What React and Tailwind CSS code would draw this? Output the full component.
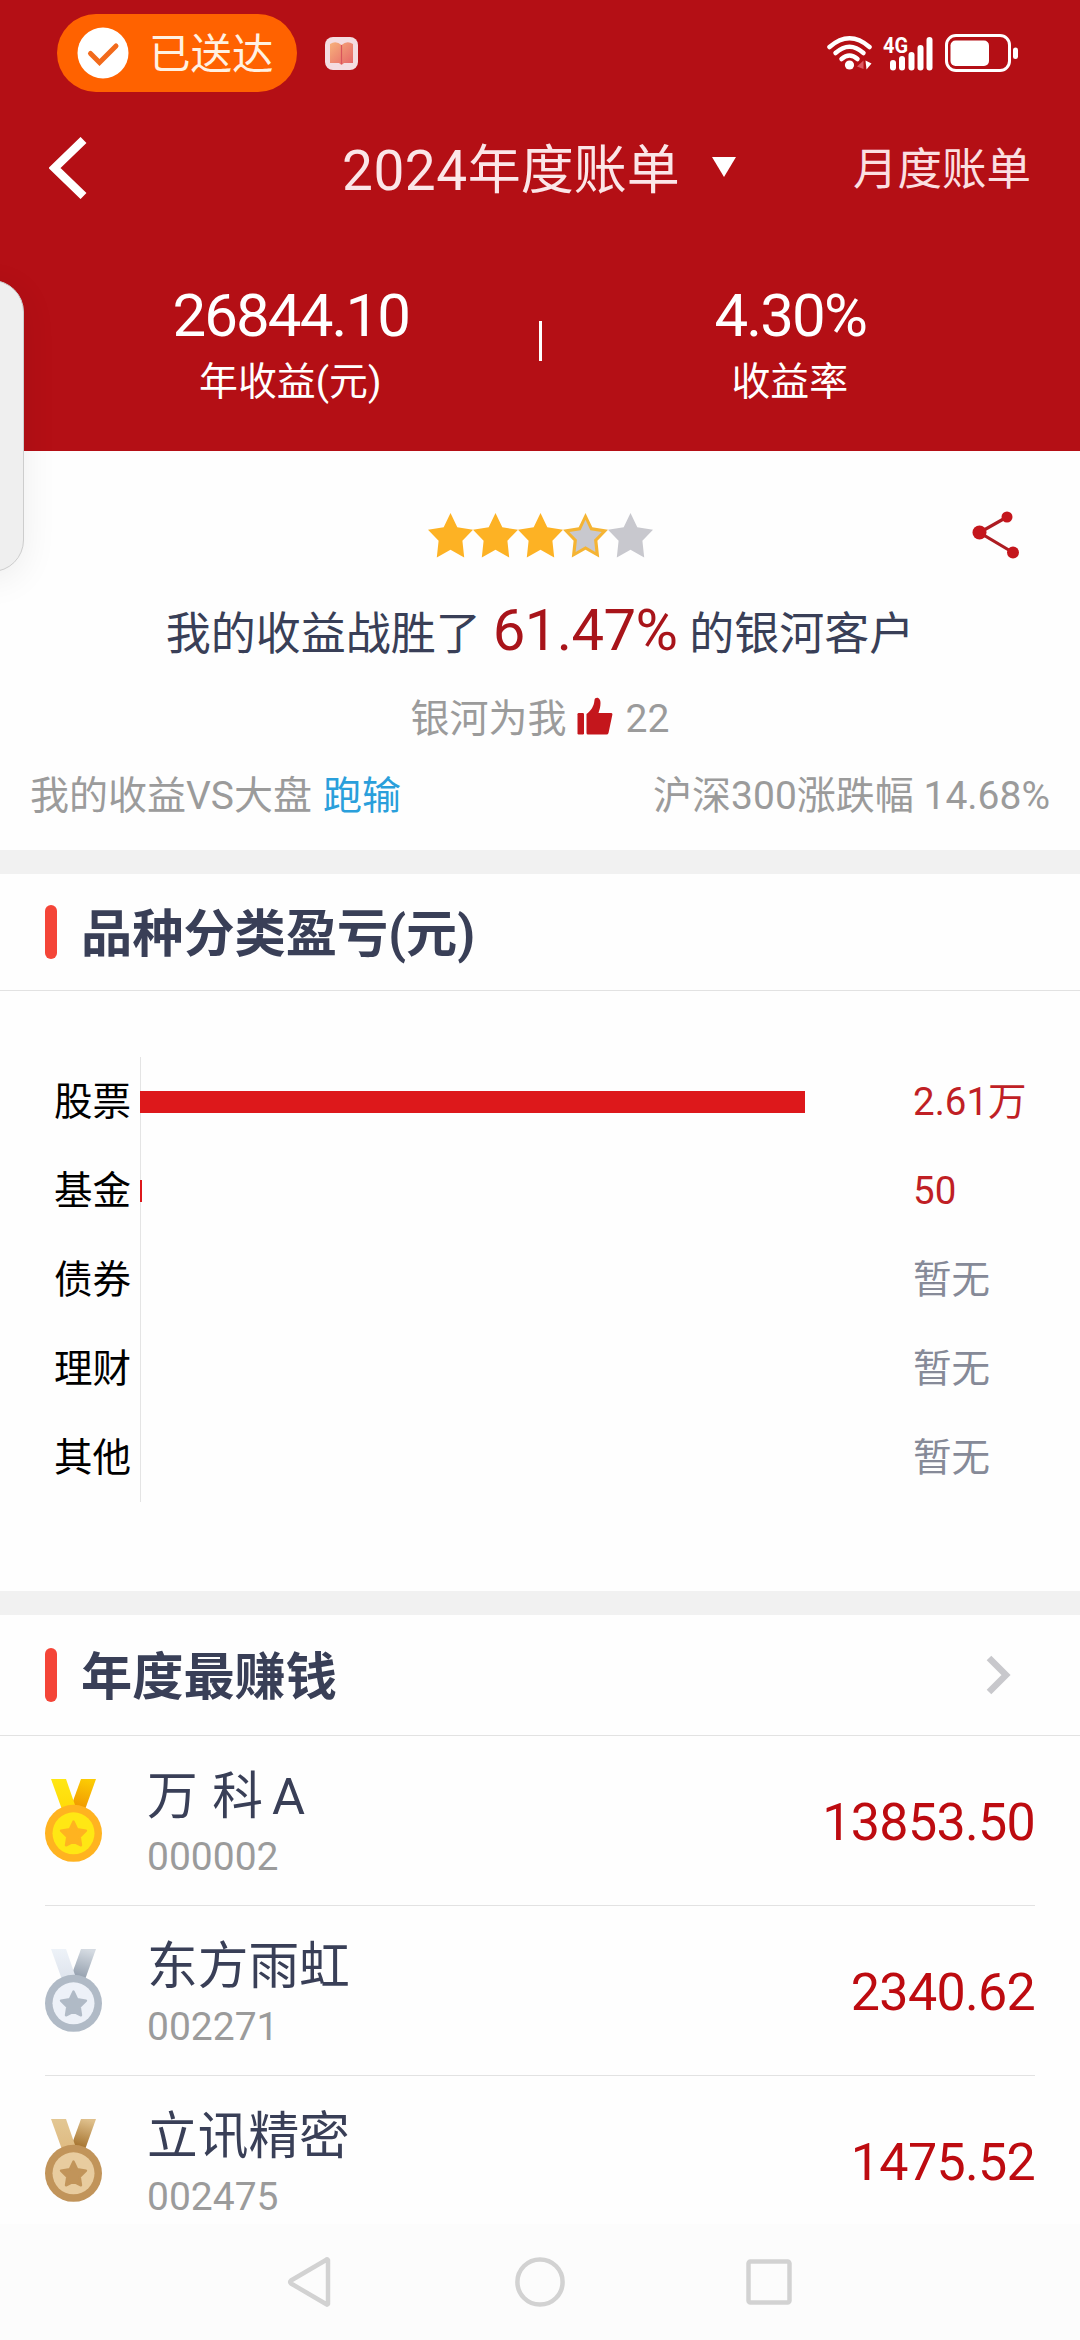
import clsx from "clsx";

const STAR_PATH =
  "M22.5 0 L29.3 14.3 L45 16.7 L34.4 27.7 L36.2 44.5 L22.5 36.7 L8.8 44.5 L10.6 27.7 L0 16.7 L15.7 14.3 Z";

const stars = ["full", "full", "full", "half", "empty"];

const categories = [
  { name: "股票", value: "2.61万", width: 665 },
  { name: "基金", value: "50", width: 1.5 },
  { name: "债券", value: null, width: 0 },
  { name: "理财", value: null, width: 0 },
  { name: "其他", value: null, width: 0 },
];

const topStocks = [
  {
    name: "万 科A",
    code: "000002",
    profit: "13853.50",
    medal: { id: "gold", ring: "#ffb320", face: "#ffe714", left: ["#ffe714", "#ffd908"], right: ["#fccb04", "#f09400"] },
  },
  {
    name: "东方雨虹",
    code: "002271",
    profit: "2340.62",
    medal: { id: "silver", ring: "#b0bac6", face: "#edf1f8", left: ["#edf2f8", "#dde3ec"], right: ["#d5dbe2", "#8d99a8"] },
  },
  {
    name: "立讯精密",
    code: "002475",
    profit: "1475.52",
    medal: { id: "bronze", ring: "#c1945a", face: "#e8cc9f", left: ["#e3c793", "#deba81"], right: ["#dfc08c", "#9e6a24"] },
  },
];

function StatusBar() {
  return (
    <div className="flex h-[106px] items-center pl-[57px] pr-[61px]">
      <div className="flex h-[78px] w-[240px] items-center rounded-full bg-[#ff6200] pl-[20px]">
        <svg width="52" height="52" viewBox="0 0 52 52" fill="none">
          <circle cx="26" cy="26" r="25.5" fill="#fff" />
          <path d="M13.5 26.5 L22.5 35.5 L39 19" stroke="#f26a1b" strokeWidth="5" strokeLinecap="round" />
        </svg>
        <span className="ml-[20px] pt-[3px] text-[41.5px] leading-[60px] text-[#fff1e2]">已送达</span>
      </div>
      <svg className="ml-[28px]" width="33" height="33" viewBox="0 0 33 33">
        <defs>
          <linearGradient id="book" x1="0" y1="0" x2="1" y2="1">
            <stop offset="0" stopColor="#f7b27c" />
            <stop offset="1" stopColor="#e56468" />
          </linearGradient>
        </defs>
        <rect width="33" height="33" rx="8" fill="#f4dde1" />
        <path d="M5 7 Q11 3 16.5 8 Q22 3 28 7 V26 H19 L16.5 28 L14 26 H5 Z" fill="url(#book)" />
        <path d="M16.5 8 V27" stroke="#d9545c" strokeWidth="1.2" />
      </svg>

      <div className="ml-auto flex items-center">
        <svg width="45" height="36" viewBox="0 0 45 36" fill="none" stroke="#fff" strokeLinecap="round">
          <path d="M2.5 12 Q22.5 -5.5 42.5 12" strokeWidth="4.5" />
          <path d="M8.5 18 Q22.5 5.5 36.5 18" strokeWidth="4.5" />
          <path d="M14.5 24 Q22.5 17 30.5 24" strokeWidth="4.5" />
          <circle cx="22.5" cy="30" r="4.6" fill="#fff" stroke="none" />
          <path d="M36.5 25.5 V34 L30 31.5 Z" fill="#dc5a62" stroke="none" />
          <path d="M38.5 25.5 L44.5 28.5 L39.5 34.5 Z" fill="#fff" stroke="none" />
        </svg>
        <svg className="ml-[10px] overflow-visible" width="52" height="36" viewBox="0 0 52 36">
          <text x="1" y="18" fontSize="22" fontWeight="700" fill="#fff" textLength="25" lengthAdjust="spacingAndGlyphs">
            4G
          </text>
          <g fill="#fff">
            <rect x="8" y="25" width="6" height="10.5" rx="3" />
            <rect x="17" y="21" width="6" height="14.5" rx="3" />
            <rect x="26.5" y="17" width="6" height="18.5" rx="3" />
            <rect x="35.5" y="10" width="6" height="25.5" rx="3" />
            <rect x="44.5" y="2" width="6" height="33.5" rx="3" />
          </g>
        </svg>
        <svg className="ml-[11px]" width="74" height="38" viewBox="0 0 74 38" fill="none">
          <rect x="1.5" y="1.5" width="63" height="35" rx="9.5" stroke="#fff" strokeWidth="3" />
          <rect x="5.5" y="6.5" width="38.5" height="25.5" rx="5" fill="#fff" />
          <rect x="68" y="13.5" width="5" height="11.5" rx="2.5" fill="#fff" />
        </svg>
      </div>
    </div>
  );
}

function Header() {
  return (
    <header className="h-[451px] bg-[#b40f15] text-white">
      <StatusBar />
      <div className="grid h-[124px] grid-cols-[293px_1fr_293px] items-center px-[49px]">
        <svg width="38" height="62" viewBox="0 0 38 62" fill="none">
          <path d="M34.5 3 L5.5 31 L34.5 59" stroke="#fff" strokeWidth="8.5" />
        </svg>
        <div className="flex items-center whitespace-nowrap pt-[6px] text-[53px] leading-[72px] text-[#fbe6e8]">
          <span className="text-[55px] tracking-[0.5px]">2024</span>
          <span>年度账单</span>
          <svg className="-mt-[8px] ml-[32px]" width="24" height="20" viewBox="0 0 24 20">
            <path d="M0 0 H24 L12 20 Z" fill="#fff" />
          </svg>
        </div>
        <span className="pt-[4px] text-right text-[44.5px] leading-[64px] text-[#fbdfe1]">月度账单</span>
      </div>
      <div className="px-[42px] pt-[52px]">
        <div className="flex h-[126px] items-center">
          <Stat value="26844.10" label="年收益(元)" />
          <div className="-mt-[8px] h-[40px] w-[3px] bg-white" />
          <Stat value="4.30%" label="收益率" />
        </div>
      </div>
    </header>
  );
}

function Stat({ value, label }) {
  return (
    <div className="flex flex-1 flex-col items-center gap-[6px]">
      <div className="pl-[1px] text-[60px] leading-[68px] tracking-[-1.9px]">{value}</div>
      <div className="text-[38.9px] leading-[52px]">{label}</div>
    </div>
  );
}

function Star({ type }) {
  if (type === "half") {
    return (
      <svg width="45" height="45" viewBox="0 0 45 45">
        <path d={STAR_PATH} fill="#f5b433" />
        <path d={STAR_PATH} fill="#c8c8ce" transform="translate(22.5 24.5) scale(0.72) translate(-22.5 -24.5)" />
      </svg>
    );
  }
  return (
    <svg width="45" height="45" viewBox="0 0 45 45">
      <path d={STAR_PATH} fill={type === "full" ? "#fdb224" : "#c8c8ce"} />
    </svg>
  );
}

function Summary() {
  return (
    <section className="h-[399px] pt-[60px] text-[#9b9b9b]">
      <div className="grid grid-cols-[1fr_auto_1fr] items-center px-[60px]">
        <div className="col-start-2 flex">
          {stars.map((type, i) => (
            <Star key={i} type={type} />
          ))}
        </div>
        <svg className="justify-self-end" width="48" height="48" viewBox="0 0 48 48">
          <path d="M35 6 L7.5 21.5 L41 41.5" fill="none" stroke="#ad1c22" strokeWidth="3.2" />
          <circle cx="7.5" cy="21.5" r="7" fill="#c4161c" />
          <circle cx="35" cy="6" r="5.5" fill="#c4161c" />
          <circle cx="41" cy="41.5" r="6" fill="#c4161c" />
        </svg>
      </div>

      <div className="mt-[33px] flex h-[76px] items-baseline justify-center whitespace-nowrap text-[45px] leading-[76px] text-[#393f57]">
        <span>我的收益战胜了</span>
        <span className="mx-[12px] text-[58px] tracking-[-0.6px] text-[#a8141a]">61.47%</span>
        <span>的银河客户</span>
      </div>

      <div className="mt-[24px] flex h-[54px] items-center justify-center text-[39px] leading-[54px]">
        <span>银河为我</span>
        <svg className="-mt-[7px] ml-[10px] mr-[13px]" width="36" height="38" viewBox="0 0 36 38" fill="#c4161c">
          <rect x="0.5" y="16" width="6.5" height="21.5" rx="1.2" />
          <path d="M9.5 17 C14 13.5 17 9.5 17.5 3 C17.8 0 23.5 -0.5 23.5 6 C23.5 10 22.5 12.5 21.5 16 H34 Q35.8 16 35.3 18 L31.5 36 Q31 37.5 29.5 37.5 H11 Q9.5 37.5 9.5 36 Z" />
        </svg>
        <span>22</span>
      </div>

      <div className="mt-[23px] flex h-[54px] items-center justify-between px-[30px] text-[39px] leading-[54px]">
        <div className="flex whitespace-nowrap">
          <span>我的收益VS大盘</span>
          <span className="ml-[11px] text-[#2a9fdb]">跑输</span>
        </div>
        <span>沪深300涨跌幅 14.68%</span>
      </div>
    </section>
  );
}

function SectionTitle({ title, more, className }) {
  return (
    <div className={clsx("flex items-center border-b border-[#e2e2e2] pl-[45px] pr-[68px]", className)}>
      <div className="h-[54px] w-[12px] rounded-full bg-[#f44538]" />
      <h2 className="ml-[24px] mt-[5px] text-[51.2px] font-bold leading-[70px] text-[#393f57]">{title}</h2>
      {more && (
        <svg className="ml-auto" width="26" height="40" viewBox="0 0 26 40" fill="none">
          <path d="M3 3 L20 20 L3 37" stroke="#c8c8cc" strokeWidth="6.5" />
        </svg>
      )}
    </div>
  );
}

function CategoryChart() {
  return (
    <div className="h-[600px] pt-[66px] text-[38.5px] leading-[52px]">
      {categories.map((item) => (
        <div key={item.name} className="flex h-[89px] items-center">
          <span className="w-[140px] pl-[54px] text-black">{item.name}</span>
          <div className="flex h-full w-[773px] items-center border-l border-[#e4e4e4]">
            <div className="-ml-px h-[22px] bg-[#dd181b]" style={{ width: item.width }} />
          </div>
          <span className={item.value ? "text-[#c01f25]" : "text-[#868a98]"}>{item.value ?? "暂无"}</span>
        </div>
      ))}
    </div>
  );
}

function Medal({ medal }) {
  return (
    <svg width="57" height="83" viewBox="0 0 57 83">
      <defs>
        <linearGradient id={`${medal.id}-left`} x1="0" y1="0" x2="0" y2="1">
          <stop offset="0" stopColor={medal.left[0]} />
          <stop offset="1" stopColor={medal.left[1]} />
        </linearGradient>
        <linearGradient id={`${medal.id}-right`} x1="0.5" y1="0" x2="0.3" y2="1">
          <stop offset="0" stopColor={medal.right[0]} />
          <stop offset="1" stopColor={medal.right[1]} />
        </linearGradient>
      </defs>
      <path d="M36 0 H51 L39.5 32 H28 V22 Z" fill={`url(#${medal.id}-right)`} />
      <path d="M6 0 H21 L30 26 V32 H17.5 Z" fill={`url(#${medal.id}-left)`} />
      <circle cx="28.5" cy="54.3" r="28.5" fill={medal.ring} />
      <circle cx="28.5" cy="54.3" r="21" fill={medal.face} />
      <path
        d="M28.5 42.5 L32.2 50.3 L41 51.6 L34.7 57.8 L36 66.3 L28.5 62.6 L21 66.3 L22.3 57.8 L16 51.6 L24.8 50.3 Z"
        fill={medal.ring}
        stroke={medal.ring}
        strokeWidth="2.4"
        strokeLinejoin="round"
      />
    </svg>
  );
}

function StockRow({ stock }) {
  // share class letter sits in a full-width cell
  const [, base, suffix] = stock.name.match(/^(.*?)([A-Z]?)$/);
  return (
    <div className="mx-[45px] flex h-[170px] shrink-0 items-center border-b border-[#e2e2e2]">
      <Medal medal={stock.medal} />
      <div className="ml-[45px] mt-[8px] flex flex-col">
        <span className="whitespace-pre text-[50.7px] leading-[64px] text-[#393f57] [word-spacing:2px]">
          {base}
          {suffix && <span className="ml-[9px]">{suffix}</span>}
        </span>
        <span className="text-[39px] leading-[56px] text-[#9b9b9b]">{stock.code}</span>
      </div>
      <span className="ml-auto pt-[4px] text-[52px] leading-[70px] tracking-[-0.7px] text-[#bd0b10]">{stock.profit}</span>
    </div>
  );
}

function NavBar() {
  return (
    <nav className="flex h-[116px] shrink-0 items-center justify-center gap-[179px] bg-[#fcfcfc]">
      <svg width="50" height="50" viewBox="0 0 50 50" fill="none" stroke="#d2d2d2" strokeWidth="4.5">
        <path d="M42 3 V47 Q41 48 40 47 L5 26.5 Q3.5 25 5 23.5 L40 3 Q41 2 42 3 Z" strokeLinejoin="round" />
      </svg>
      <svg width="50" height="50" viewBox="0 0 50 50" fill="none" stroke="#d2d2d2" strokeWidth="4.5">
        <circle cx="25" cy="25" r="22.6" />
      </svg>
      <svg width="50" height="50" viewBox="0 0 50 50" fill="none" stroke="#d2d2d2" strokeWidth="4.5">
        <rect x="4.5" y="4.5" width="41" height="41" rx="2" />
      </svg>
    </nav>
  );
}

export default function App() {
  return (
    <div className="relative flex h-[2340px] w-[1080px] flex-col overflow-hidden bg-[#fefefe] font-[Roboto,'Noto_Sans_CJK_SC',sans-serif]">
      <div className="h-[2224px] shrink-0 overflow-hidden">
        <Header />
        <Summary />
        <div className="h-[24px] bg-[#f1f1f1]" />
        <SectionTitle title="品种分类盈亏(元)" className="h-[117px]" />
        <CategoryChart />
        <div className="h-[24px] bg-[#f1f1f1]" />
        <SectionTitle title="年度最赚钱" more className="h-[121px]" />
        {topStocks.map((stock) => (
          <StockRow key={stock.code} stock={stock} />
        ))}
      </div>
      <NavBar />

      {/* collapsed floating handle on the left edge */}
      <div className="absolute -left-[40px] top-[280px] h-[292px] w-[64px] rounded-[40px] border border-[#cdcdcd] bg-[#efefef] shadow-[0_8px_36px_rgba(0,0,0,0.07)]" />
    </div>
  );
}
